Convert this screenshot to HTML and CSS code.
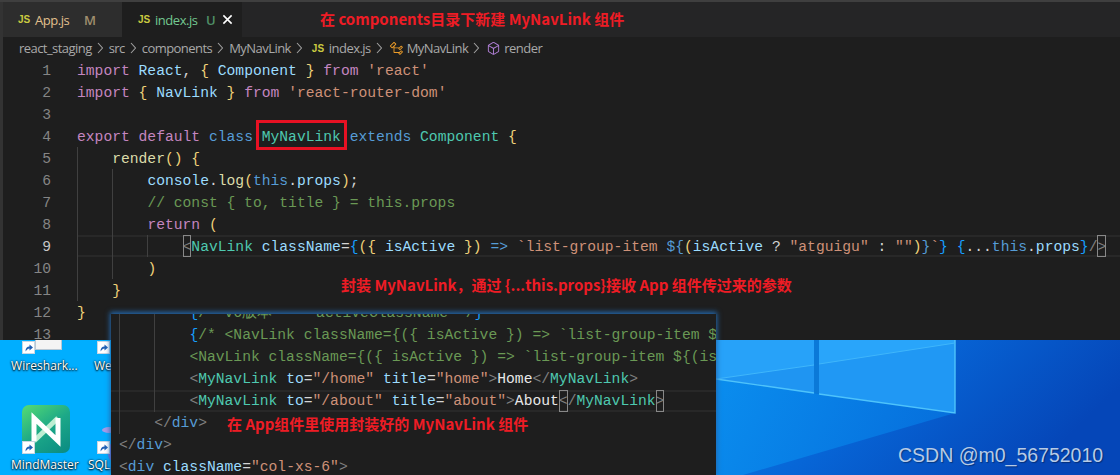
FILE: index.html
```html
<!DOCTYPE html>
<html lang="zh">
<head>
<meta charset="utf-8">
<title>MyNavLink</title>
<link rel="stylesheet" href="styles.css">
</head>
<body>
<div class="screen">
  <div class="editor">
    <div class="rail"></div>
    <div class="pane">
      <div class="tabs">
        <div class="tab tab-off"><span class="js">JS</span><span class="name mod">App.js</span><span class="badge badge-m">M</span></div>
        <div class="tab tab-on"><span class="js">JS</span><span class="name new">index.js</span><span class="badge badge-u">U</span>
          <svg class="close" viewBox="0 0 12 12"><path d="M1.5 1.5L10.5 10.5M10.5 1.5L1.5 10.5"/></svg></div>
      </div>
      <div class="crumbs">
        <span>react_staging</span><svg class="chev" viewBox="0 0 6 14"><path d="M1 2L5.5 7L1 12"/></svg>
        <span>src</span><svg class="chev" viewBox="0 0 6 14"><path d="M1 2L5.5 7L1 12"/></svg>
        <span>components</span><svg class="chev" viewBox="0 0 6 14"><path d="M1 2L5.5 7L1 12"/></svg>
        <span>MyNavLink</span><svg class="chev" viewBox="0 0 6 14"><path d="M1 2L5.5 7L1 12"/></svg>
        <span class="js js-crumb">JS</span><span>index.js</span><svg class="chev" viewBox="0 0 6 14"><path d="M1 2L5.5 7L1 12"/></svg>
        <svg class="sym sym-class" viewBox="0 0 16 16"><path d="M11.34 9.71h.71l2.67-2.67v-.71L13.38 5h-.7l-1.82 1.81h-5V5.56l1.86-1.85V3l-2-2H5L1 5v.71l2 2h.71l1.14-1.15v5.79l.5.5H10v.52l1.33 1.34h.71l2.67-2.67v-.71L13.37 10h-.7l-1.86 1.85h-5v-4H10v.48l1.34 1.38zm1.69-3.65l.63.63-2 2-.63-.63 2-2zm0 5l.63.63-2 2-.63-.63 2-2zM3.35 6.65l-1.29-1.3 3.29-3.29 1.3 1.29-3.3 3.3z"/></svg>
        <span>MyNavLink</span><svg class="chev" viewBox="0 0 6 14"><path d="M1 2L5.5 7L1 12"/></svg>
        <svg class="sym sym-method" viewBox="0 0 16 16"><path d="M13.51 4l-5-3h-1l-5 3-.49.86v6l.49.85 5 3h1l5-3 .49-.85v-6L13.51 4zm-6 9.56l-4.5-2.7V5.7l4.5 2.45v5.41zM3.27 4.7l4.74-2.84 4.74 2.84-4.74 2.59L3.27 4.7zm9.74 6.16l-4.5 2.7V8.15l4.5-2.45v5.16z"/></svg>
        <span>render</span>
      </div>
      <div class="code">
        <div class="ln"><span class="num">1</span><span class="src"><i class="kw">import</i> <i class="var">React</i>, <i class="g">{</i> <i class="var">Component</i> <i class="g">}</i> <i class="kw">from</i> <i class="str">'react'</i></span></div>
        <div class="ln"><span class="num">2</span><span class="src"><i class="kw">import</i> <i class="g">{</i> <i class="var">NavLink</i> <i class="g">}</i> <i class="kw">from</i> <i class="str">'react-router-dom'</i></span></div>
        <div class="ln"><span class="num">3</span><span class="src"></span></div>
        <div class="ln"><span class="num">4</span><span class="src"><i class="kw">export</i> <i class="kw">default</i> <i class="blue">class</i> <span class="boxed"><i class="type">MyNavLink</i></span> <i class="blue">extends</i> <i class="type">Component</i> <i class="g">{</i></span></div>
        <div class="ln"><span class="num">5</span><span class="src"><b class="ind"></b><i class="fn">render</i><i class="g">()</i> <i class="g">{</i></span></div>
        <div class="ln"><span class="num">6</span><span class="src"><b class="ind"></b><b class="ind"></b><i class="var">console</i>.<i class="fn">log</i><i class="g">(</i><i class="blue">this</i>.<i class="var">props</i><i class="g">)</i>;</span></div>
        <div class="ln"><span class="num">7</span><span class="src"><b class="ind"></b><b class="ind"></b><i class="cm">// const { to, title } = this.props</i></span></div>
        <div class="ln"><span class="num">8</span><span class="src"><b class="ind"></b><b class="ind"></b><i class="kw">return</i> <i class="g">(</i></span></div>
        <div class="ln ln-active"><span class="num">9</span><span class="src"><b class="ind"></b><b class="ind"></b><b class="ind"></b><i class="gray match">&lt;</i><i class="type">NavLink</i> <i class="var">className</i>=<i class="b">{</i><i class="g">({</i> <i class="var">isActive</i> <i class="g">})</i> <i class="blue">=&gt;</i> <i class="str">`list-group-item </i><i class="blue">${</i><i class="g">(</i><i class="var">isActive</i> <i class="plain">?</i> <i class="str">"atguigu"</i> <i class="plain">:</i> <i class="str">""</i><i class="g">)</i><i class="blue">}</i><i class="str">`</i><i class="b">}</i> <i class="b">{</i>...<i class="blue">this</i>.<i class="var">props</i><i class="b">}</i><i class="gray">/</i><i class="gray match">&gt;</i></span></div>
        <div class="ln"><span class="num">10</span><span class="src"><b class="ind"></b><b class="ind"></b><i class="g">)</i></span></div>
        <div class="ln"><span class="num">11</span><span class="src"><b class="ind"></b><i class="g">}</i></span></div>
        <div class="ln"><span class="num">12</span><span class="src"><i class="g">}</i></span></div>
        <div class="ln"><span class="num">13</span><span class="src"></span></div>
      </div>
    </div>
  </div>

  <div class="wall">
    <div class="wall-left">
      <div class="white-tile"></div>
      <svg class="shortcut sc-a" viewBox="0 0 13 13"><rect x="0.5" y="0.5" width="12" height="12" fill="#fff" stroke="#c8d6e2"/><path d="M3.5 10.5C3.5 7 5 5.5 7.5 5.5V3.5L11 6.5L7.5 9.5V7.5C6 7.5 5 8.5 3.5 10.5Z" fill="#1f5fb4"/></svg>
      <svg class="shortcut sc-b" viewBox="0 0 13 13"><rect x="0.5" y="0.5" width="12" height="12" fill="#fff" stroke="#c8d6e2"/><path d="M3.5 10.5C3.5 7 5 5.5 7.5 5.5V3.5L11 6.5L7.5 9.5V7.5C6 7.5 5 8.5 3.5 10.5Z" fill="#1f5fb4"/></svg>
      <span class="dlabel dl-wire">Wireshark...</span>
      <span class="dlabel dl-we">We</span>
      <div class="mm-tile">
        <svg class="mm-mark" viewBox="0 0 48 48"><path class="mm-soft" d="M12 36L36 13"/><path class="mm-main" d="M12 36V13L36 36V13"/></svg>
      </div>
      <div class="blob blob-a"></div>
      <div class="blob blob-b"></div>
      <svg class="shortcut sc-c" viewBox="0 0 13 13"><rect x="0.5" y="0.5" width="12" height="12" fill="#fff" stroke="#c8d6e2"/><path d="M3.5 10.5C3.5 7 5 5.5 7.5 5.5V3.5L11 6.5L7.5 9.5V7.5C6 7.5 5 8.5 3.5 10.5Z" fill="#1f5fb4"/></svg>
      <svg class="shortcut sc-d" viewBox="0 0 13 13"><rect x="0.5" y="0.5" width="12" height="12" fill="#fff" stroke="#c8d6e2"/><path d="M3.5 10.5C3.5 7 5 5.5 7.5 5.5V3.5L11 6.5L7.5 9.5V7.5C6 7.5 5 8.5 3.5 10.5Z" fill="#1f5fb4"/></svg>
      <span class="dlabel dl-mind">MindMaster</span>
      <span class="dlabel dl-sql">SQL</span>
    </div>
    <svg class="wall-right" viewBox="0 0 404 135" preserveAspectRatio="none">
      <defs>
        <linearGradient id="wbase" x1="0" y1="0" x2="1" y2="0.35">
          <stop offset="0" stop-color="#0b85e6"/>
          <stop offset="0.45" stop-color="#0767d8"/>
          <stop offset="1" stop-color="#0546b8"/>
        </linearGradient>
        <linearGradient id="wbeam" x1="0" y1="0" x2="1" y2="0.2">
          <stop offset="0" stop-color="#0a8dee"/>
          <stop offset="1" stop-color="#0670dd"/>
        </linearGradient>
      </defs>
      <rect width="404" height="135" fill="url(#wbase)"/>
      <polygon points="0,39 98,53 239,73 27,135 0,135" fill="url(#wbeam)"/>
      <polygon points="98,0 103,0 103,54 98,53" fill="#0b79d8"/>
      <polygon points="0,0 98,0 98,53 0,39" fill="#1f95f2"/>
      <polygon points="103,0 239,0 239,73 103,54" fill="#2098f4"/>
      <polygon points="0,0 98,0 98,25 0,39" fill="#27a2f9"/>
      <polygon points="103,0 239,0 239,3 103,24" fill="#29a5fa"/>
      <path d="M0 39L98 53M103 54L239 73V0" fill="none" stroke="#4ec3fb" stroke-width="1.4"/>
      <path d="M0 39L98 25M103 24L239 3" fill="none" stroke="#3fb6fb" stroke-width="1"/>
    </svg>
  </div>

  <div class="window2">
    <div class="code2">
      <div class="l2"><b class="ind2"></b><b class="ind2"></b><i class="cm2"><i class="b">{</i>/* v6版本 --- activeClassName */<i class="b">}</i></i></div>
      <div class="l2"><b class="ind2"></b><b class="ind2"></b><i class="cm2"><i class="b">{</i>/* &lt;NavLink className={({ isActive }) =&gt; `list-group-item ${(isActive ? "atguigu" : "")}`} */}</i></div>
      <div class="l2"><b class="ind2"></b><b class="ind2"></b><i class="cm2">&lt;NavLink className={({ isActive }) =&gt; `list-group-item ${(isActive ? "atguigu" : "")}`}</i></div>
      <div class="l2"><b class="ind2"></b><b class="ind2"></b><i class="gray">&lt;</i><i class="type">MyNavLink</i> <i class="var">to</i>=<i class="str">"/home"</i> <i class="var">title</i>=<i class="str">"home"</i><i class="gray">&gt;</i><i class="text">Home</i><i class="gray">&lt;/</i><i class="type">MyNavLink</i><i class="gray">&gt;</i></div>
      <div class="l2 l2-active"><b class="ind2"></b><b class="ind2"></b><i class="gray">&lt;</i><i class="type">MyNavLink</i> <i class="var">to</i>=<i class="str">"/about"</i> <i class="var">title</i>=<i class="str">"about"</i><i class="gray">&gt;</i><i class="text">About</i><i class="gray match">&lt;</i><i class="gray">/</i><i class="type">MyNavLink</i><i class="gray match">&gt;</i></div>
      <div class="l2"><b class="ind2"></b><i class="gray">&lt;/</i><i class="blue">div</i><i class="gray">&gt;</i></div>
      <div class="l2"><i class="gray">&lt;/</i><i class="blue">div</i><i class="gray">&gt;</i></div>
      <div class="l2"><i class="gray">&lt;</i><i class="blue">div</i> <i class="var">className</i>=<i class="str">"col-xs-6"</i><i class="gray">&gt;</i></div>
    </div>
  </div>

  <p class="note note-a">在 components目录下新建 MyNavLink 组件</p>
  <p class="note note-b">封装 MyNavLink，通过 {...this.props}接收 App 组件传过来的参数</p>
  <p class="note note-c">在 App组件里使用封装好的 MyNavLink 组件</p>
  <span class="mark">CSDN @m0_56752010</span>
</div>
</body>
</html>
```

FILE: styles.css
```css
* { box-sizing: border-box; }
html, body { margin: 0; padding: 0; background: #1e1e1e; }
i, b { font-style: normal; font-weight: normal; }

.screen { position: relative; width: 1120px; height: 475px; overflow: hidden; background: #1e1e1e; }

.editor { display: flex; height: 340px; overflow: hidden; border-top: 2px solid #3f3f3f; }
.rail { width: 3px; background: #333333; flex: none; }
.pane { flex: 1; min-width: 0; display: flex; flex-direction: column; }

.tabs { display: flex; height: 35px; background: #252526; flex: none; font: 13px "Open Sans", sans-serif; }
.tab { display: flex; align-items: center; height: 35px; width: 119px; padding-left: 15px; }
.tab-off { background: #2d2d2d; }
.tab-on { background: #1e1e1e; width: 120px; padding-left: 16px; }
.js { font: bold 10px "Liberation Sans", sans-serif; color: #cbcb41; width: 17px; flex: none; }
.name { letter-spacing: -0.45px; }
.mod { color: #e2c08d; width: 49px; }
.new { color: #73c991; width: 51px; }
.badge { font-size: 13px; font-weight: 600; width: 16px; }
.badge-m { color: #a08f6f; }
.badge-u { color: #4f8f66; }
.close { width: 11px; height: 11px; flex: none; }
.close path { stroke: #ffffff; stroke-width: 1.7; fill: none; }

.crumbs { display: flex; align-items: center; height: 22px; padding-left: 16px; flex: none; font: 13px "Open Sans", sans-serif; letter-spacing: -0.55px; color: #a9a9a9; }
.chev { width: 6px; height: 14px; margin: 0 6px 0 5px; flex: none; }
.chev path { stroke: #a0a0a0; stroke-width: 1.1; fill: none; }
.js-crumb { width: 17px; margin-left: 4px; letter-spacing: 0; }
.sym { width: 15px; height: 15px; flex: none; margin: 0 3px 0 1px; }
.sym-class { fill: #ee9d28; }
.sym-method { fill: #b180d7; }

.code { font: 14.67px/24px "Liberation Mono", monospace; color: #d4d4d4; }
.code2 { font: 14.67px/22px "Liberation Mono", monospace; color: #d4d4d4; }
.ln { display: flex; height: 22px; white-space: pre; }
.ln-active .src { box-shadow: inset 0 2px 0 #282828, inset 0 -2px 0 #282828; flex: 1; }
.num { width: 48px; height: 22px; text-align: right; color: #858585; flex: none; margin-right: 26px; }
.ln-active .num { color: #c6c6c6; }
.src { display: block; min-width: 0; height: 22px; }
.ind { display: inline-block; width: 35.2px; height: 22px; vertical-align: top; border-left: 1px solid #404040; }

.kw { color: #c586c0; }
.blue { color: #569cd6; }
.var { color: #9cdcfe; }
.type { color: #4ec9b0; }
.fn { color: #dcdcaa; }
.str { color: #ce9178; }
.cm { color: #6a9955; }
.g { color: #f0d27a; }
.b { color: #179fff; }
.gray { color: #808080; }
.plain { color: #d4d4d4; }
.text { color: #e8e8e8; }
.match { outline: 1px solid #888888; outline-offset: -1px; display: inline-block; height: 22px; vertical-align: top; }

.boxed { position: relative; display: inline-block; height: 22px; vertical-align: top; }
.boxed::after { content: ""; position: absolute; left: -6px; right: -6px; top: -5px; bottom: -3px; border: 3px solid #e81123; }

.wall { display: flex; height: 135px; }
.wall-left { position: relative; width: 111px; background: #00aeff; flex: none; }
.wall-right { display: block; width: 404px; height: 135px; margin-left: 605px; flex: none; }

.white-tile { position: absolute; left: 35px; top: 0; width: 27px; height: 10px; background: #f4f4f4; border: 1px solid #b9c8d4; border-top: 0; }
.shortcut { position: absolute; width: 13px; height: 13px; }
.sc-a { left: 22px; top: 1px; }
.sc-b { left: 97px; top: 1px; }
.sc-c { left: 22px; top: 101px; }
.sc-d { left: 97px; top: 101px; }
.dlabel { position: absolute; font: 12px/16px "Open Sans", sans-serif; color: #fff; text-shadow: 0 1px 2px #000, 0 0 2px #000; white-space: nowrap; }
.dl-wire { left: 11px; top: 18px; letter-spacing: 0.05px; }
.dl-we { left: 94px; top: 18px; }
.dl-mind { left: 11px; top: 117px; }
.dl-sql { left: 88px; top: 117px; }
.mm-tile { position: absolute; left: 22px; top: 65px; width: 48px; height: 48px; border-radius: 7px; background: linear-gradient(145deg, #56dc72 0%, #1ca888 50%, #0a8a82 100%); }
.mm-mark { display: block; width: 48px; height: 48px; }
.mm-main { fill: none; stroke: #ffffff; stroke-width: 5; }
.mm-soft { fill: none; stroke: #bdeed2; stroke-width: 5; }
.blob { position: absolute; }
.blob-a { left: 102px; top: 87px; width: 14px; height: 6px; border-radius: 50%; background: #a79be6; }
.blob-b { left: 108px; top: 104px; width: 6px; height: 16px; border-radius: 50%; background: #7d6cd8; }

.window2 { position: absolute; left: 111px; top: 314px; width: 605px; height: 161px; background: #1e1e1e; box-shadow: 0 -1px 5px 1px #2468ad; }
.code2 { height: 161px; overflow: hidden; padding-left: 8px; }
.code2 .l2:first-child { margin-top: -12px; }
.l2 { height: 22px; white-space: pre; }
.l2-active { box-shadow: inset 0 2px 0 #282828, inset 0 -2px 0 #282828; margin-left: -8px; padding-left: 8px; }
.ind2 { display: inline-block; width: 35.2px; height: 22px; vertical-align: top; border-left: 1px solid #404040; }
.cm2 { color: #6a9955; }

.note { position: absolute; margin: 0; font: bold 15px/20px "Noto Sans CJK SC", "Liberation Sans", sans-serif; color: #ee1c25; white-space: nowrap; }
.note-a { left: 320px; top: 9px; }
.note-b { left: 341px; top: 275px; }
.note-c { left: 227px; top: 414px; }
.mark { position: absolute; left: 898px; top: 444px; font: 19.5px/22px "Liberation Sans", sans-serif; color: #b7cbe6; text-shadow: 1px 1px 1px rgba(0,0,0,.35); white-space: nowrap; }
```
